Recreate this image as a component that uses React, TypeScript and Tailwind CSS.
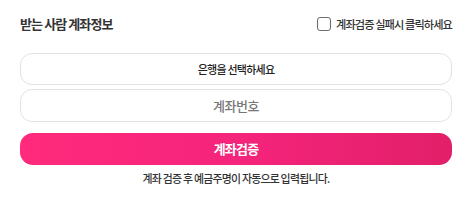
export default function App() {
  return (
    <div
      className="w-full bg-white px-5 pt-[17px] pb-4 text-[#222]"
      style={{ fontFamily: '"Noto Sans CJK KR", "Noto Sans", sans-serif' }}
    >
      {/* header */}
      <div className="flex h-[14px] items-center justify-between">
        <h3 className="text-[13px] font-bold tracking-[-0.07em] text-[#333]">받는 사람 계좌정보</h3>
        <label className="flex items-center gap-[5px]">
          <span className="block h-[14px] w-[14px] rounded-[3px] border border-[#6b6b6b] bg-white" />
          <span className="text-[11.2px] font-medium tracking-[-0.08em] text-[#333]">계좌검증 실패시 클릭하세요</span>
        </label>
      </div>

      {/* inputs */}
      <div className="mt-[22px] flex flex-col gap-1">
        <button className="flex h-8 w-full items-center justify-center rounded-[12px] border border-[#e2e2e2] bg-white text-[11px] font-medium tracking-[-0.07em] text-[#222]">
          은행을 선택하세요
        </button>
        <div className="flex h-[33px] w-full items-center justify-center rounded-[12px] border border-[#e2e2e2] bg-white text-[13px] font-medium tracking-[-0.04em] text-[#777]">
          계좌번호
        </div>
      </div>

      {/* verify */}
      <button className="mt-[11px] flex h-8 w-full items-center justify-center rounded-[13px] bg-gradient-to-r from-[#ff2a7b] via-[#f5247c] to-[#e21f69] text-[13px] font-bold tracking-[-0.06em] text-white">
        계좌검증
      </button>
      <p className="mt-[5px] text-center text-[10.9px] font-medium tracking-[-0.07em] text-[#333]">
        계좌 검증 후 예금주명이 자동으로 입력됩니다.
      </p>
    </div>
  );
}
